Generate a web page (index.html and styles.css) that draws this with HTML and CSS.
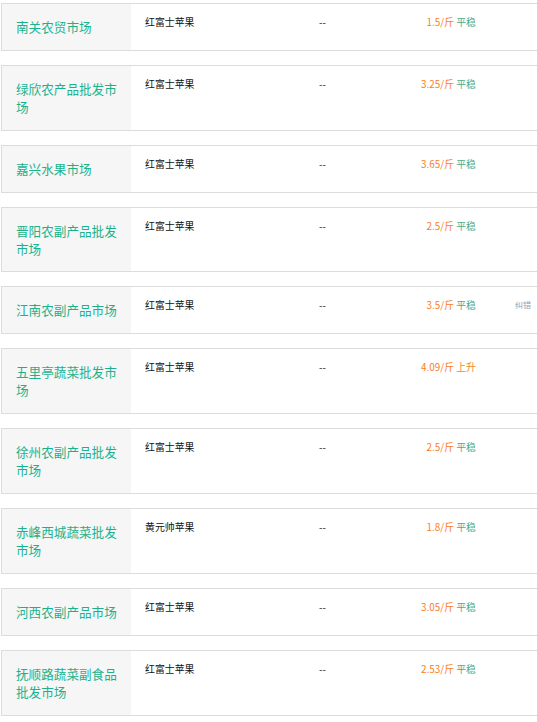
FILE: index.html
```html
<!DOCTYPE html>
<html lang="zh">
<head>
<meta charset="utf-8">
<link rel="stylesheet" href="styles.css">
</head>
<body>
<div class="list">
  <div class="row"><div class="name">南关农贸市场</div><div class="prod">红富士苹果</div><div class="dash">--</div><div class="price"><span class="num">1.5/斤</span> <span class="flat">平稳</span></div><div class="act"></div></div>
  <div class="row"><div class="name">绿欣农产品批发市场</div><div class="prod">红富士苹果</div><div class="dash">--</div><div class="price"><span class="num">3.25/斤</span> <span class="flat">平稳</span></div><div class="act"></div></div>
  <div class="row"><div class="name">嘉兴水果市场</div><div class="prod">红富士苹果</div><div class="dash">--</div><div class="price"><span class="num">3.65/斤</span> <span class="flat">平稳</span></div><div class="act"></div></div>
  <div class="row"><div class="name">晋阳农副产品批发市场</div><div class="prod">红富士苹果</div><div class="dash">--</div><div class="price"><span class="num">2.5/斤</span> <span class="flat">平稳</span></div><div class="act"></div></div>
  <div class="row"><div class="name">江南农副产品市场</div><div class="prod">红富士苹果</div><div class="dash">--</div><div class="price"><span class="num">3.5/斤</span> <span class="flat">平稳</span></div><div class="act">纠错</div></div>
  <div class="row"><div class="name">五里亭蔬菜批发市场</div><div class="prod">红富士苹果</div><div class="dash">--</div><div class="price"><span class="num">4.09/斤</span> <span class="up">上升</span></div><div class="act"></div></div>
  <div class="row"><div class="name">徐州农副产品批发市场</div><div class="prod">红富士苹果</div><div class="dash">--</div><div class="price"><span class="num">2.5/斤</span> <span class="flat">平稳</span></div><div class="act"></div></div>
  <div class="row"><div class="name">赤峰西城蔬菜批发市场</div><div class="prod">黄元帅苹果</div><div class="dash">--</div><div class="price"><span class="num">1.8/斤</span> <span class="flat">平稳</span></div><div class="act"></div></div>
  <div class="row"><div class="name">河西农副产品市场</div><div class="prod">红富士苹果</div><div class="dash">--</div><div class="price"><span class="num">3.05/斤</span> <span class="flat">平稳</span></div><div class="act"></div></div>
  <div class="row"><div class="name">抚顺路蔬菜副食品批发市场</div><div class="prod">红富士苹果</div><div class="dash">--</div><div class="price"><span class="num">2.53/斤</span> <span class="flat">平稳</span></div><div class="act"></div></div>
</div>
</body>
</html>
```

FILE: styles.css
```css
html, body {
  margin: 0;
  padding: 0;
  background: #fff;
  overflow: hidden;
}
body {
  font-family: "Noto Sans CJK SC", "Liberation Sans", sans-serif;
}
.list {
  padding: 3px 0 0 1px;
  display: flex;
  flex-direction: column;
  gap: 14px;
}
.row {
  display: flex;
  width: 560px;
  border: 1px solid #dcdcdc;
  border-right: none;
}
.name {
  flex: none;
  width: 129px;
  box-sizing: border-box;
  padding: 14px 8px 14px 14px;
  background: #f6f6f6;
  color: #19b28c;
  font-size: 12.6px;
  line-height: 17.9px;
}
.prod, .dash, .price, .act {
  padding-top: 10px;
  font-size: 9.9px;
  line-height: 16px;
  box-sizing: border-box;
}
.prod {
  flex: none;
  width: 174px;
  padding-left: 14px;
  color: #111;
}
.dash {
  flex: none;
  width: 60px;
  padding-left: 14px;
  color: #222;
}
.price {
  flex: none;
  width: 111px;
  text-align: right;
  white-space: nowrap;
}
.num { color: #fa7d1e; }
.flat { color: #4aab8e; }
.up { color: #f08a2c; }
.act {
  flex: none;
  padding-left: 39px;
  font-size: 8.1px;
  color: #9aa0b0;
}
```
